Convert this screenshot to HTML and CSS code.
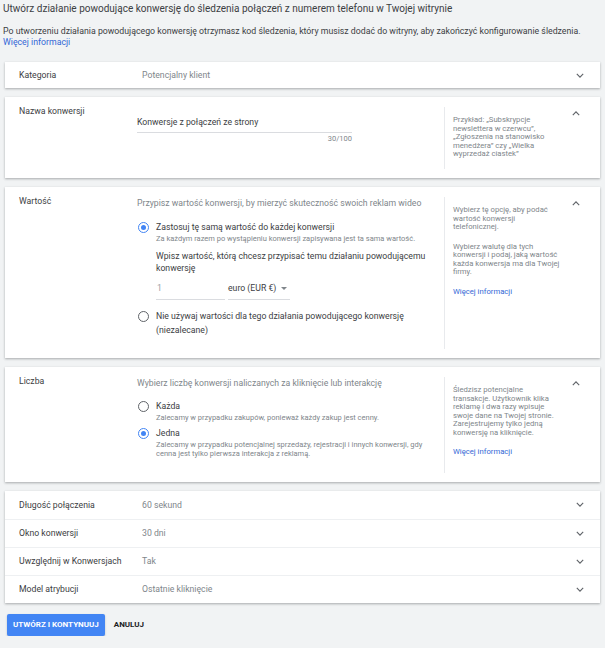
FILE: index.html
```html
<!DOCTYPE html>
<html lang="pl">
<head>
<meta charset="utf-8">
<title>Konwersja</title>
<link rel="stylesheet" href="styles.css">
</head>
<body>
<header class="head">
  <h1 class="title">Utwórz działanie powodujące konwersję do śledzenia połączeń z numerem telefonu w Twojej witrynie</h1>
  <p class="intro">Po utworzeniu działania powodującego konwersję otrzymasz kod śledzenia, który musisz dodać do witryny, aby zakończyć konfigurowanie śledzenia.<br><a class="link" href="#">Więcej informacji</a></p>
</header>

<main class="cards">
  <section class="card row">
    <div class="label">Kategoria</div>
    <div class="value">Potencjalny klient</div>
    <svg class="chev" viewBox="0 0 10 6"><path d="M1 1l4 4 4-4"/></svg>
  </section>

  <section class="card panel panel-name">
    <div class="label">Nazwa konwersji</div>
    <div class="main">
      <div class="field">
        <div class="field-text">Konwersje z połączeń ze strony</div>
        <div class="counter">30/100</div>
      </div>
    </div>
    <aside class="side">
      <p>Przykład: „Subskrypcje newslettera w czerwcu”, „Zgłoszenia na stanowisko menedżera” czy „Wielka wyprzedaż ciastek”</p>
    </aside>
    <svg class="chev" viewBox="0 0 10 6"><path d="M1 5l4-4 4 4"/></svg>
  </section>

  <section class="card panel panel-value">
    <div class="label">Wartość</div>
    <div class="main">
      <p class="lead">Przypisz wartość konwersji, by mierzyć skuteczność swoich reklam wideo</p>
      <div class="option opt-first">
        <span class="radio on"></span>
        <div class="opt-body">
          <div class="opt-title">Zastosuj tę samą wartość do każdej konwersji</div>
          <div class="opt-desc">Za każdym razem po wystąpieniu konwersji zapisywana jest ta sama wartość.</div>
          <div class="prompt">Wpisz wartość, którą chcesz przypisać temu działaniu powodującemu konwersję</div>
          <div class="inputs">
            <div class="num">1</div>
            <div class="select">euro (EUR €)<span class="tri"></span></div>
          </div>
        </div>
      </div>
      <div class="option opt-no">
        <span class="radio"></span>
        <div class="opt-body">
          <div class="opt-big">Nie używaj wartości dla tego działania powodującego konwersję (niezalecane)</div>
        </div>
      </div>
    </div>
    <aside class="side">
      <p>Wybierz tę opcję, aby podać wartość konwersji telefonicznej.</p>
      <p>Wybierz walutę dla tych konwersji i podaj, jaką wartość każda konwersja ma dla Twojej firmy.</p>
      <p><a class="link" href="#">Więcej informacji</a></p>
    </aside>
    <svg class="chev" viewBox="0 0 10 6"><path d="M1 5l4-4 4 4"/></svg>
  </section>

  <section class="card panel panel-count">
    <div class="label">Liczba</div>
    <div class="main">
      <p class="lead">Wybierz liczbę konwersji naliczanych za kliknięcie lub interakcję</p>
      <div class="option opt-first">
        <span class="radio"></span>
        <div class="opt-body">
          <div class="opt-title">Każda</div>
          <div class="opt-desc">Zalecamy w przypadku zakupów, ponieważ każdy zakup jest cenny.</div>
        </div>
      </div>
      <div class="option opt-next">
        <span class="radio on"></span>
        <div class="opt-body">
          <div class="opt-title">Jedna</div>
          <div class="opt-desc">Zalecamy w przypadku potencjalnej sprzedaży, rejestracji i innych konwersji, gdy cenna jest tylko pierwsza interakcja z reklamą.</div>
        </div>
      </div>
    </div>
    <aside class="side">
      <p>Śledzisz potencjalne transakcje. Użytkownik klika reklamę i dwa razy wpisuje swoje dane na Twojej stronie. Zarejestrujemy tylko jedną konwersję na kliknięcie.</p>
      <p><a class="link" href="#">Więcej informacji</a></p>
    </aside>
    <svg class="chev" viewBox="0 0 10 6"><path d="M1 5l4-4 4 4"/></svg>
  </section>

  <section class="card group">
    <div class="row">
      <div class="label">Długość połączenia</div>
      <div class="value">60 sekund</div>
      <svg class="chev" viewBox="0 0 10 6"><path d="M1 1l4 4 4-4"/></svg>
    </div>
    <div class="row">
      <div class="label">Okno konwersji</div>
      <div class="value">30 dni</div>
      <svg class="chev" viewBox="0 0 10 6"><path d="M1 1l4 4 4-4"/></svg>
    </div>
    <div class="row">
      <div class="label">Uwzględnij w Konwersjach</div>
      <div class="value">Tak</div>
      <svg class="chev" viewBox="0 0 10 6"><path d="M1 1l4 4 4-4"/></svg>
    </div>
    <div class="row">
      <div class="label">Model atrybucji</div>
      <div class="value">Ostatnie kliknięcie</div>
      <svg class="chev" viewBox="0 0 10 6"><path d="M1 1l4 4 4-4"/></svg>
    </div>
  </section>

  <div class="actions">
    <button class="btn primary" type="button">UTWÓRZ I KONTYNUUJ</button>
    <button class="btn flat" type="button">ANULUJ</button>
  </div>
</main>
</body>
</html>
```

FILE: styles.css
```css
* { box-sizing: border-box; }

body {
  margin: 0;
  background: #f1f3f4;
  font-family: Roboto, "Noto Sans", sans-serif;
  color: #3c4043;
}

.head {
  padding: 2px 3px 0;
}

.title {
  margin: 0;
  font-size: 10px;
  line-height: 14px;
  font-weight: 400;
  color: #3c4043;
}

.intro {
  margin: 9.5px 0 0;
  font-size: 8.75px;
  line-height: 11px;
  color: #3c4043;
}

.link {
  color: #3367d6;
  text-decoration: none;
}

.cards {
  padding: 14.5px 5px 0;
}

.card {
  background: #fff;
  box-shadow: 0 1px 2px rgba(60, 64, 67, 0.3), 0 1px 3px rgba(60, 64, 67, 0.12);
  margin-bottom: 9px;
}

.row {
  display: flex;
  align-items: center;
  height: 26px;
  padding: 0 16px 0 14px;
  font-size: 8.7px;
}

.row .label {
  width: 123px;
  color: #3c4043;
}

.row .value {
  flex: 1;
  color: #80868b;
}

.chev {
  width: 8px;
  height: 5px;
  fill: none;
  stroke: #5f6368;
  stroke-width: 1.4;
}

.panel {
  display: grid;
  grid-template-columns: 118px 307px 1fr 12px;
  align-items: start;
  padding: 8px 16px 9px 14px;
  font-size: 8.7px;
}

.panel .label {
  line-height: 12px;
}

.panel .chev {
  margin-top: 5.5px;
}

.main {
  padding-bottom: 12px;
}

.side {
  align-self: stretch;
  margin-top: 2px;
  border-left: 1px solid #e8eaed;
  padding: 9px 0 10px 8px;
  font-size: 7.7px;
  line-height: 8.5px;
  color: #80868b;
}

.side p {
  margin: 0 0 11px;
  max-width: 107px;
}

.side p:last-child {
  margin-bottom: 0;
}

.panel-name .side {
  padding-bottom: 10.5px;
}

.panel-count .side {
  padding-bottom: 16px;
}

.field {
  width: 215px;
  margin-top: 11px;
}

.field-text {
  line-height: 12px;
  padding-bottom: 3.5px;
  border-bottom: 1px solid #dadce0;
}

.counter {
  text-align: right;
  font-size: 7.5px;
  line-height: 8px;
  color: #80868b;
  margin-top: 2px;
}

.lead {
  margin: 2px 0 0;
  line-height: 12px;
  color: #80868b;
}

.option {
  display: flex;
  gap: 7px;
}

.opt-first {
  margin-top: 11.5px;
}

.panel-count .opt-first {
  margin-top: 10.5px;
}

.opt-next {
  margin-top: 5px;
}

.opt-no {
  margin-top: 9.5px;
}

.radio {
  flex: none;
  width: 11px;
  height: 11px;
  margin: 1px 0 0 1px;
  border: 1.3px solid #5f6368;
  border-radius: 50%;
  position: relative;
}

.radio.on {
  border-color: #4285f4;
}

.radio.on::after {
  content: "";
  position: absolute;
  inset: 2px;
  border-radius: 50%;
  background: #4285f4;
}

.opt-no .radio {
  margin-top: 1.5px;
}

.opt-title {
  line-height: 13px;
}

.opt-desc {
  font-size: 7.5px;
  line-height: 9px;
  color: #80868b;
  max-width: 275px;
}

.prompt {
  margin-top: 7.5px;
  line-height: 12px;
  max-width: 280px;
}

.inputs {
  display: flex;
  gap: 3px;
  margin-top: 7px;
  line-height: 11px;
}

.num {
  width: 69px;
  padding: 1.5px 0 5px 1px;
  border-bottom: 1px solid #dadce0;
  color: #9aa0a6;
}

.select {
  width: 62px;
  padding: 1.5px 0 5px 0;
  border-bottom: 1px solid #dadce0;
  display: flex;
  align-items: center;
  gap: 5px;
}

.tri {
  width: 0;
  height: 0;
  border-left: 3px solid transparent;
  border-right: 3px solid transparent;
  border-top: 3px solid #80868b;
}

.opt-big {
  line-height: 14px;
}

.group .row {
  height: 28px;
}

.group .row + .row {
  border-top: 1px solid #eef0f2;
}

.actions {
  display: flex;
  align-items: center;
  gap: 9px;
  padding: 2px 0 0 2px;
}

.btn {
  font-family: Roboto, "Noto Sans", sans-serif;
  font-size: 8px;
  font-weight: 700;
  border: 0;
  border-radius: 2px;
  cursor: pointer;
}

.btn.primary {
  background: #4285f4;
  color: #fff;
  height: 22px;
  padding: 0 6px;
  box-shadow: 0 1px 2px rgba(60, 64, 67, 0.3);
}

.btn.flat {
  background: transparent;
  color: #202124;
  padding: 0;
}
```
